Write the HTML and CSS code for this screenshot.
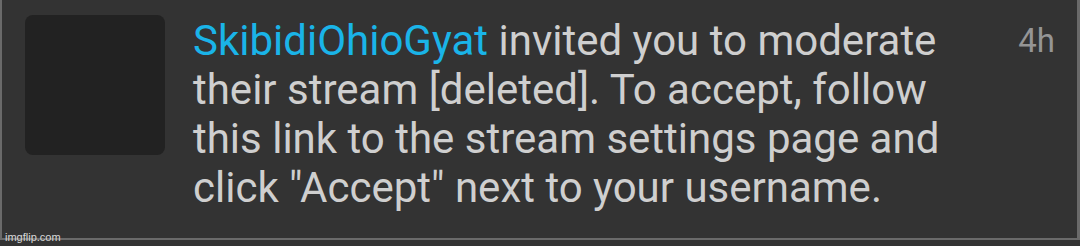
FILE: index.html
```html
<!DOCTYPE html>
<html>
<head>
	<title>Notification</title>
	<link rel="stylesheet" href="styles.css">
</head>
<body>
	<div class="notif">
		<div class="avatar"></div>
		<div class="msg">
			<a class="user" href="#">SkibidiOhioGyat</a> invited you to moderate their stream [deleted]. To accept, follow this link to the stream settings page and click "Accept" next to your username.
		</div>
		<div class="time">4h</div>
	</div>
	<div class="mark">imgflip.com</div>
</body>
</html>
```

FILE: styles.css
```css
html, body {
	margin: 0;
	padding: 0;
	background: #333;
}

body {
	width: 1080px;
	height: 246px;
	overflow: hidden;
	position: relative;
	font-family: Roboto, "Liberation Sans", sans-serif;
}

.notif {
	display: flex;
	align-items: flex-start;
	height: 240px;
	box-sizing: border-box;
	border-left: 2px solid #6a6a6a;
	border-right: 3px solid #6a6a6a;
	border-bottom: 2px solid #6a6a6a;
	padding: 15px 0 0 23px;
}

.avatar {
	flex: none;
	width: 140px;
	height: 140px;
	border-radius: 8px;
	background: #222;
}

.msg {
	width: 770px;
	margin-left: 28px;
	margin-top: 1px;
	font-size: 42px;
	line-height: 49px;
	color: #cfcfcf;
}

.user {
	color: #1ab4e8;
	text-decoration: none;
}

.time {
	margin-left: auto;
	margin-right: 22px;
	margin-top: 6px;
	font-size: 33px;
	line-height: 40px;
	color: #959595;
}

.mark {
	position: absolute;
	left: 5px;
	top: 231px;
	font-size: 11px;
	color: #d8d8d8;
	font-family: "Liberation Sans", sans-serif;
}
```
